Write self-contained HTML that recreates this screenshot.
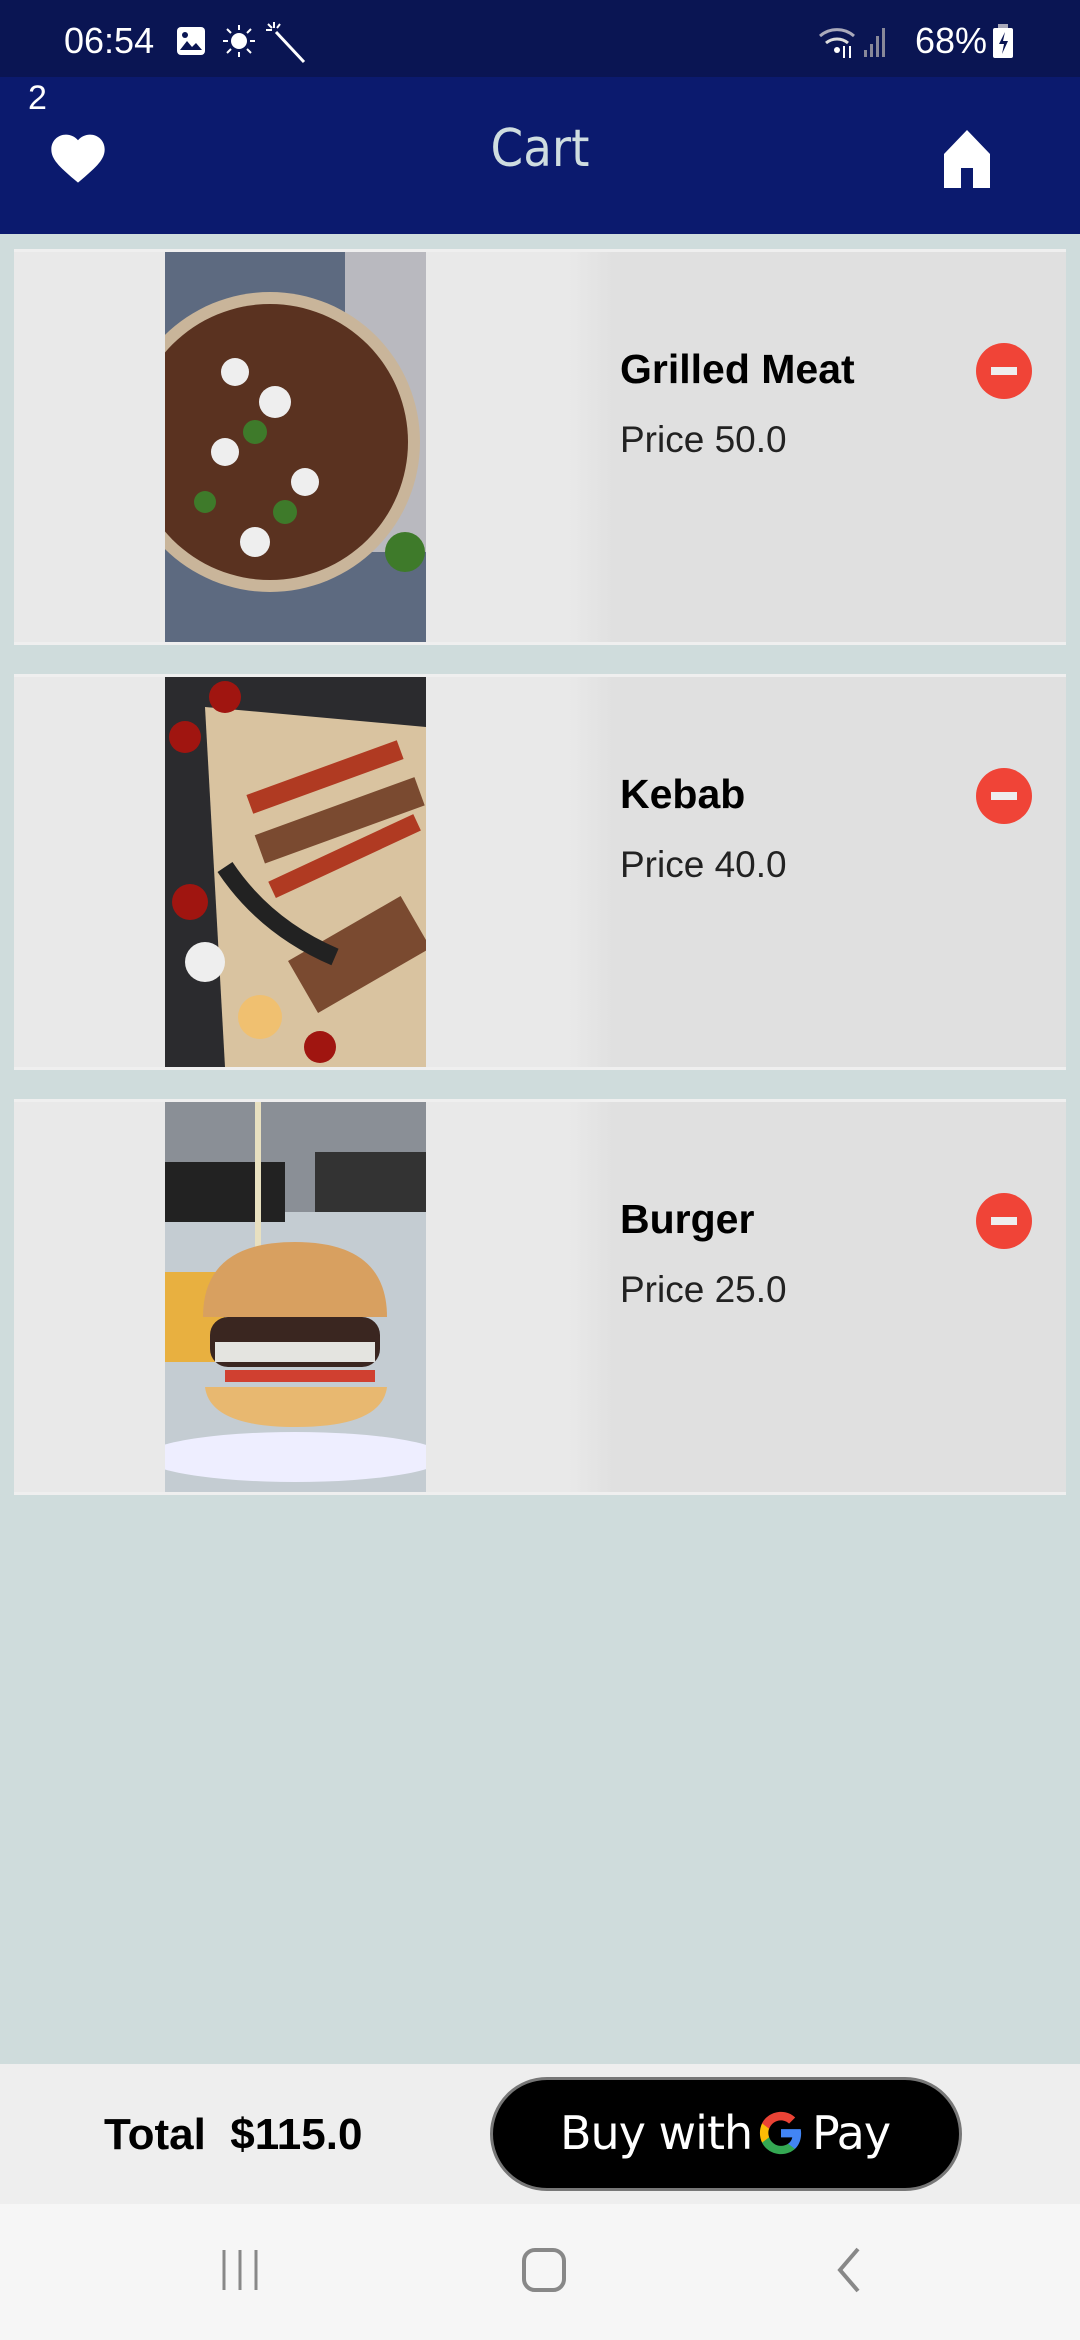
<!DOCTYPE html>
<html><head><meta charset="utf-8"><style>
*{margin:0;padding:0;box-sizing:border-box}
body{width:1080px;height:2340px;background:#cfdcdc;font-family:"Liberation Sans",sans-serif;position:relative;overflow:hidden}
.abs{position:absolute}
.sb{left:0;top:0;width:1080px;height:77px;background:#0a1553;color:#fff}
.ab{left:0;top:77px;width:1080px;height:157px;background:#0b1a6e}
.card{position:absolute;left:14px;width:1052px;height:396px;background:linear-gradient(90deg,#e9e9e9 0,#e9e9e9 555px,#e0e0e0 600px,#e0e0e0 100%);border-top:3px solid #efefef;border-bottom:3px solid #efefef}
.img{position:absolute;left:151px;top:0;width:261px;height:390px}
.t{position:absolute;left:606px;top:94px;font-size:41px;font-weight:bold;color:#000}
.p{position:absolute;left:606px;top:167px;font-size:37px;color:#222}
.m{position:absolute;left:962px;top:91px;width:56px;height:56px;border-radius:50%;background:#f04437}
.m:after{content:"";position:absolute;left:15px;top:24px;width:26px;height:8px;background:#eee}
</style></head><body>
<div class="abs sb">
<div class="abs" style="left:64px;top:20px;font-size:36px">06:54</div>
<svg class="abs" style="left:176px;top:26px" width="30" height="30"><rect x="1" y="1" width="28" height="28" rx="4" fill="#fff"/><path d="M4 24l7-9 5 6 4-4 6 7z" fill="#0a1553"/><circle cx="9" cy="9" r="3" fill="#0a1553"/></svg>
<svg class="abs" style="left:222px;top:24px" width="34" height="34"><circle cx="17" cy="17" r="8" fill="#fff"/><g stroke="#fff" stroke-width="2"><path d="M17 1v5M17 28v5M1 17h5M28 17h5M5 5l4 4M25 25l4 4M5 29l4-4M25 9l4-4"/></g></svg>
<svg class="abs" style="left:266px;top:22px" width="40" height="42"><path d="M10 10l28 30" stroke="#fff" stroke-width="3"/><path d="M8 0v6M0 8h6M2 2l4 4M14 2l-3 4" stroke="#fff" stroke-width="2"/></svg>
<svg class="abs" style="left:818px;top:24px" width="70" height="36"><path d="M2 12a26 26 0 0 1 34 0" stroke="#aab" stroke-width="3" fill="none"/><path d="M8 19a17 17 0 0 1 22 0" stroke="#ddd" stroke-width="3" fill="none"/><circle cx="19" cy="26" r="3" fill="#fff"/><path d="M26 22v12M32 22v12" stroke="#fff" stroke-width="2"/><rect x="46" y="26" width="3" height="7" fill="#889"/><rect x="52" y="20" width="3" height="13" fill="#889"/><rect x="58" y="12" width="3" height="21" fill="#889"/><rect x="64" y="4" width="3" height="29" fill="#889"/></svg>
<div class="abs" style="left:915px;top:20px;font-size:36px">68%</div>
<svg class="abs" style="left:993px;top:24px" width="20" height="34"><rect x="5" y="0" width="10" height="4" fill="#aab"/><rect x="0" y="4" width="20" height="30" rx="2" fill="#fff"/><path d="M12 8l-6 12h5l-2 10 6-13h-5z" fill="#0a1553"/></svg>
</div>
<div class="abs ab">
<div class="abs" style="left:28px;top:2px;font-size:34px;color:#fff">2</div>
<svg class="abs" style="left:46px;top:48px" width="64" height="62" viewBox="0 0 24 22"><path d="M12 21l-1.5-1.3C5 15 2 12.2 2 8.5 2 5.4 4.4 3 7.5 3c1.7 0 3.4.8 4.5 2.1C13.1 3.8 14.8 3 16.5 3 19.6 3 22 5.4 22 8.5c0 3.7-3 6.5-8.5 11.2z" fill="#fff"/></svg>
<div class="abs" style="left:0;width:1080px;top:42px;text-align:center;font-size:52px;color:#cfdde0;font-family:'DejaVu Sans Condensed','DejaVu Sans',sans-serif">Cart</div>
<svg class="abs" style="left:942px;top:51px" width="50" height="60" viewBox="0 0 50 60"><path d="M25 2L2 26v34h17V40h12v20h17V26z" fill="#fff"/></svg>
</div>

<div class="card" style="top:249px">
<svg class="img" viewBox="0 0 261 390" preserveAspectRatio="none"><rect width="261" height="390" fill="#5d6a80"/><rect x="180" width="81" height="300" fill="#b9b9bf"/><circle cx="105" cy="190" r="150" fill="#c9b59a"/><circle cx="105" cy="190" r="138" fill="#5a3220"/><g fill="#eee"><circle cx="70" cy="120" r="14"/><circle cx="110" cy="150" r="16"/><circle cx="60" cy="200" r="14"/><circle cx="140" cy="230" r="14"/><circle cx="90" cy="290" r="15"/></g><g fill="#3e7a2a"><circle cx="90" cy="180" r="12"/><circle cx="40" cy="250" r="11"/><circle cx="120" cy="260" r="12"/><circle cx="240" cy="300" r="20"/></g></svg>
<div class="t">Grilled Meat</div><div class="p">Price 50.0</div><div class="m"></div></div>

<div class="card" style="top:674px">
<svg class="img" viewBox="0 0 261 390" preserveAspectRatio="none"><rect width="261" height="390" fill="#2b2b2e"/><path d="M40 30L261 50V390H60z" fill="#d9c3a0"/><g fill="#b03a22"><rect x="80" y="90" width="160" height="20" transform="rotate(-20 160 100)"/><rect x="100" y="170" width="160" height="18" transform="rotate(-25 180 180)"/></g><g fill="#7a4a30"><rect x="90" y="130" width="170" height="30" transform="rotate(-20 170 145)"/><rect x="130" y="250" width="130" height="60" transform="rotate(-30 190 280)"/></g><g fill="#a01510"><circle cx="20" cy="60" r="16"/><circle cx="60" cy="20" r="16"/><circle cx="25" cy="225" r="18"/><circle cx="155" cy="370" r="16"/></g><circle cx="40" cy="285" r="20" fill="#eee"/><circle cx="95" cy="340" r="22" fill="#f0c070"/><path d="M60 190q40 60 110 90" stroke="#222" stroke-width="18" fill="none"/></svg>
<div class="t">Kebab</div><div class="p">Price 40.0</div><div class="m"></div></div>

<div class="card" style="top:1099px">
<svg class="img" viewBox="0 0 261 390" preserveAspectRatio="none"><rect width="261" height="390" fill="#c4ccd2"/><rect width="261" height="110" fill="#8a8f96"/><rect x="0" y="60" width="120" height="60" fill="#222"/><rect x="150" y="50" width="111" height="60" fill="#333"/><rect x="90" y="0" width="6" height="170" fill="#e8e0c0"/><ellipse cx="130" cy="355" rx="150" ry="25" fill="#eef"/><path d="M0 170h60v90H0z" fill="#e8b040"/><path d="M38 215q0-75 92-75t92 75z" fill="#d8a060"/><rect x="45" y="215" width="170" height="50" rx="18" fill="#3a2620"/><rect x="50" y="240" width="160" height="20" fill="#e4e4e0"/><rect x="60" y="268" width="150" height="12" fill="#d04030"/><path d="M40 285h182q-5 40-91 40t-91-40z" fill="#e8b870"/></svg>
<div class="t">Burger</div><div class="p">Price 25.0</div><div class="m"></div></div>

<div class="abs" style="left:0;top:2064px;width:1080px;height:140px;background:#eeeeee">
<div class="abs" style="left:104px;top:46px;font-size:44px;font-weight:bold;color:#000">Total&nbsp; $115.0</div>
<div class="abs" style="left:490px;top:13px;width:472px;height:114px;border-radius:57px;background:#000;border:3px solid #777"></div>
<div class="abs" style="left:560px;top:42px;font-size:46px;color:#fff;font-family:'DejaVu Sans',sans-serif;letter-spacing:-1px">Buy with</div>
<svg class="abs" style="left:758px;top:46px" width="46" height="46" viewBox="0 0 24 24"><path d="M22.5 12.2c0-.8-.1-1.5-.2-2.2H12v4.3h5.9c-.3 1.4-1 2.5-2.2 3.3v2.7h3.600c2-1.9 3.2-4.7 3.2-8.1z" fill="#4285f4"/><path d="M12 23c3 0 5.5-1 7.3-2.7l-3.6-2.7c-1 .7-2.2 1.1-3.7 1.1-2.9 0-5.3-1.9-6.2-4.5H2.1v2.8C3.9 20.6 7.7 23 12 23z" fill="#34a853"/><path d="M5.8 14.2c-.2-.7-.4-1.4-.4-2.2s.1-1.5.4-2.2V7H2.1C1.4 8.5 1 10.2 1 12s.4 3.5 1.1 5z" fill="#fbbc05"/><path d="M12 5.4c1.6 0 3.1.6 4.2 1.7l3.2-3.2C17.5 2.1 15 1 12 1 7.7 1 3.9 3.4 2.1 7l3.7 2.8C6.7 7.3 9.1 5.4 12 5.4z" fill="#ea4335"/></svg>
<div class="abs" style="left:812px;top:42px;font-size:46px;color:#fff;font-family:'DejaVu Sans',sans-serif;letter-spacing:-1px">Pay</div>
</div>
<div class="abs" style="left:0;top:2204px;width:1080px;height:136px;background:#f6f6f6">
<svg class="abs" style="left:220px;top:40px" width="50" height="50"><path d="M4 6v40M20 6v40M36 6v40" stroke="#888" stroke-width="3"/></svg>
<svg class="abs" style="left:520px;top:40px" width="50" height="50"><rect x="4" y="6" width="40" height="40" rx="11" fill="none" stroke="#888" stroke-width="4"/></svg>
<svg class="abs" style="left:830px;top:40px" width="40" height="50"><path d="M28 5L10 26l18 21" fill="none" stroke="#888" stroke-width="4"/></svg>
</div>
</body></html>
